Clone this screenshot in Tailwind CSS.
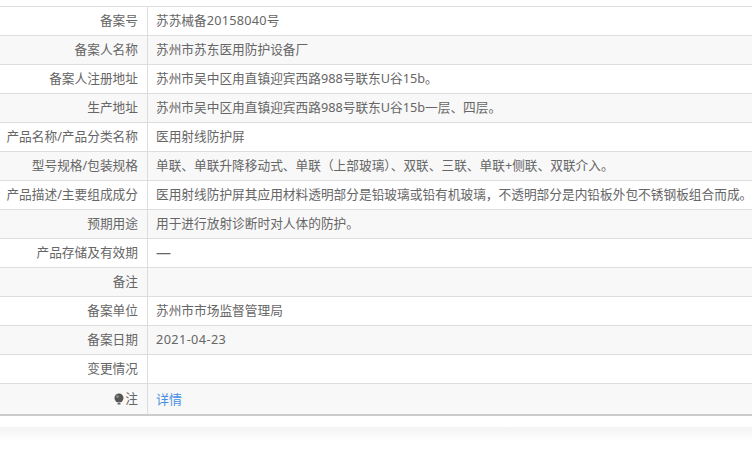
<!DOCTYPE html>
<html lang="zh-CN">
<head>
<meta charset="UTF-8">
<title>备案信息</title>
<script src="https://cdn.jsdelivr.net/npm/@tailwindcss/browser@4"></script>
</head>
<body class="bg-white overflow-hidden h-[452px] font-['Noto_Sans','Noto_Sans_CJK_SC',sans-serif] text-[12.7px] text-[#666]">
<div class="pt-[6px]">
  <div class="border-t border-[#ddd] border-b-2 border-b-[#ccc]">
    <div class="flex h-[29px] border-b border-[#ddd]">
      <div class="w-[148px] shrink-0 border-r border-[#ddd] pr-[9px] text-right leading-[26px]">备案号</div>
      <div class="pl-[8px] leading-[26px] whitespace-nowrap">苏苏械备<span class="tracking-[0.25px]">20158040</span>号</div>
    </div>
    <div class="flex h-[29px] border-b border-[#ddd] bg-[#f8f8f8]">
      <div class="w-[148px] shrink-0 border-r border-[#ddd] pr-[9px] text-right leading-[26px]">备案人名称</div>
      <div class="pl-[8px] leading-[26px] whitespace-nowrap">苏州市苏东医用防护设备厂</div>
    </div>
    <div class="flex h-[29px] border-b border-[#ddd]">
      <div class="w-[148px] shrink-0 border-r border-[#ddd] pr-[9px] text-right leading-[26px]">备案人注册地址</div>
      <div class="pl-[8px] leading-[26px] whitespace-nowrap">苏州市吴中区甪直镇迎宾西路988号联东U谷15b。</div>
    </div>
    <div class="flex h-[29px] border-b border-[#ddd] bg-[#f8f8f8]">
      <div class="w-[148px] shrink-0 border-r border-[#ddd] pr-[9px] text-right leading-[26px]">生产地址</div>
      <div class="pl-[8px] leading-[26px] whitespace-nowrap">苏州市吴中区甪直镇迎宾西路988号联东U谷15b一层、四层。</div>
    </div>
    <div class="flex h-[29px] border-b border-[#ddd]">
      <div class="w-[148px] shrink-0 border-r border-[#ddd] pr-[9px] text-right leading-[26px]">产品名称/产品分类名称</div>
      <div class="pl-[8px] leading-[26px] whitespace-nowrap">医用射线防护屏</div>
    </div>
    <div class="flex h-[29px] border-b border-[#ddd] bg-[#f8f8f8]">
      <div class="w-[148px] shrink-0 border-r border-[#ddd] pr-[9px] text-right leading-[26px]">型号规格/包装规格</div>
      <div class="pl-[8px] leading-[26px] whitespace-nowrap">单联、单联升降移动式、单联（上部玻璃）、双联、三联、单联+侧联、双联介入。</div>
    </div>
    <div class="flex h-[29px] border-b border-[#ddd]">
      <div class="w-[148px] shrink-0 border-r border-[#ddd] pr-[9px] text-right leading-[26px]">产品描述/主要组成成分</div>
      <div class="pl-[8px] leading-[26px] whitespace-nowrap">医用射线防护屏其应用材料透明部分是铅玻璃或铅有机玻璃，不透明部分是内铅板外包不锈钢板组合而成。</div>
    </div>
    <div class="flex h-[29px] border-b border-[#ddd] bg-[#f8f8f8]">
      <div class="w-[148px] shrink-0 border-r border-[#ddd] pr-[9px] text-right leading-[26px]">预期用途</div>
      <div class="pl-[8px] leading-[26px] whitespace-nowrap">用于进行放射诊断时对人体的防护。</div>
    </div>
    <div class="flex h-[29px] border-b border-[#ddd]">
      <div class="w-[148px] shrink-0 border-r border-[#ddd] pr-[9px] text-right leading-[26px]">产品存储及有效期</div>
      <div class="pl-[8px] leading-[26px] whitespace-nowrap text-[15px]">—</div>
    </div>
    <div class="flex h-[29px] border-b border-[#ddd] bg-[#f8f8f8]">
      <div class="w-[148px] shrink-0 border-r border-[#ddd] pr-[9px] text-right leading-[26px]">备注</div>
      <div class="pl-[8px] leading-[26px] whitespace-nowrap"></div>
    </div>
    <div class="flex h-[29px] border-b border-[#ddd]">
      <div class="w-[148px] shrink-0 border-r border-[#ddd] pr-[9px] text-right leading-[26px]">备案单位</div>
      <div class="pl-[8px] leading-[26px] whitespace-nowrap">苏州市市场监督管理局</div>
    </div>
    <div class="flex h-[29px] border-b border-[#ddd] bg-[#f8f8f8]">
      <div class="w-[148px] shrink-0 border-r border-[#ddd] pr-[9px] text-right leading-[26px]">备案日期</div>
      <div class="pl-[8px] leading-[26px] whitespace-nowrap tracking-[0.4px]">2021-04-23</div>
    </div>
    <div class="flex h-[29px] border-b border-[#ddd]">
      <div class="w-[148px] shrink-0 border-r border-[#ddd] pr-[9px] text-right leading-[26px]">变更情况</div>
      <div class="pl-[8px] leading-[26px] whitespace-nowrap"></div>
    </div>
    <div class="flex h-[30px] bg-[#f8f8f8]">
      <div class="w-[148px] shrink-0 border-r border-[#ddd] pr-[9px] flex items-center justify-end">
        <svg width="10" height="13" viewBox="0 0 10 13" class="mr-[1px]"><circle cx="5" cy="5" r="4.5" fill="#555"/><circle cx="3.5" cy="3.5" r="1.5" fill="#888"/><rect x="3.5" y="10" width="3" height="1.5" fill="#666"/></svg>
        <span>注</span>
      </div>
      <div class="pl-[8px] pt-[2px] flex items-center text-[13px]"><a href="#" class="text-[#4a90e2]">详情</a></div>
    </div>
  </div>
  <div class="h-[11px]"></div>
  <div class="h-[14px] bg-gradient-to-b from-[#f3f3f3] to-white"></div>
</div>
</body>
</html>
